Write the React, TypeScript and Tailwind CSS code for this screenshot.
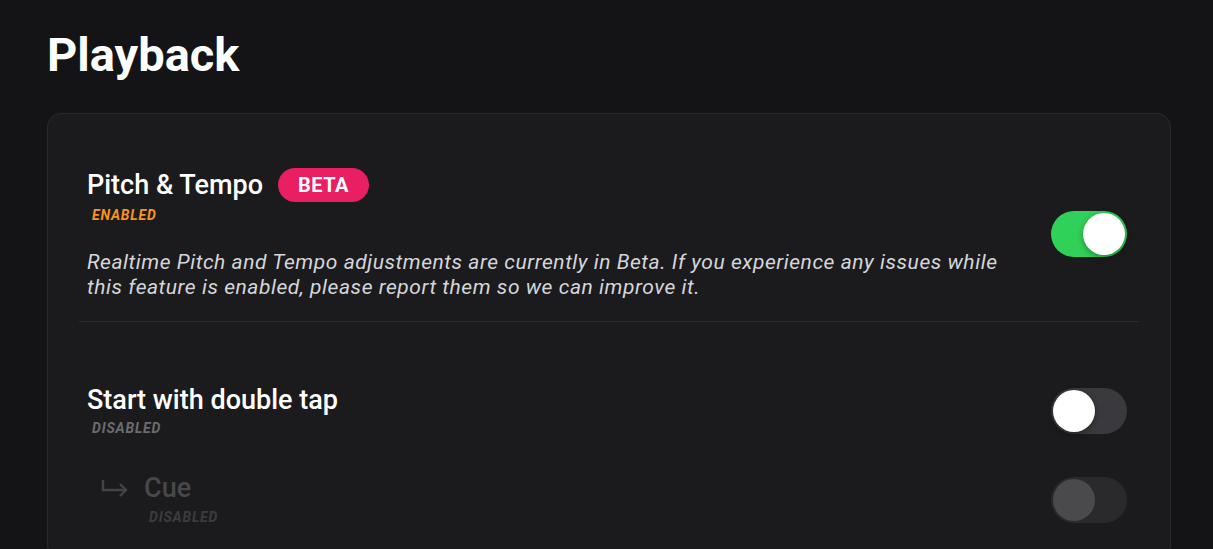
import React from 'react';

const font = { fontFamily: 'Roboto, "Noto Sans", sans-serif' };

const Toggle = ({ on, dim }: { on?: boolean; dim?: boolean }) => {
    const track = on ? 'bg-[#30d158]' : dim ? 'bg-[#2a2a2c]' : 'bg-[#3a3a3e]';
    const knob = dim ? 'bg-[#4a4a4c]' : 'bg-white';
    return (
        <div className={`flex h-[46px] w-[76px] shrink-0 items-center rounded-full p-[2px] ${track} ${on ? 'justify-end' : 'justify-start'}`}>
            <div className={`h-[42px] w-[42px] rounded-full ${knob} ${dim ? '' : 'shadow-[0_2px_6px_rgba(0,0,0,0.35)]'}`} />
        </div>
    );
};

export default function App() {
    return (
        <div className="min-h-screen bg-[#141416] text-white" style={font}>
            <div className="pl-[47px] pr-[42px] pt-[26px]">
                <h1 className="text-[47px] font-bold leading-[58px]">Playback</h1>

                <div className="mt-[29px] rounded-[14px] border border-[#2a2a2d] bg-[#1b1b1d] px-[31px] pt-[54px] pb-8">
                    {/* Pitch & Tempo */}
                    <div className="flex items-center justify-between pl-[8px] pr-[12px] pb-[21px]">
                        <div>
                            <div className="flex items-center">
                                <span className="text-[27px] font-medium leading-[30px]">Pitch &amp; Tempo</span>
                                <span className="ml-[15px] rounded-full bg-[#e91e63] px-[20px] text-[20px] font-bold leading-[34px] tracking-[0.5px]">BETA</span>
                            </div>
                            <div className="mt-[5px] pl-[5px] text-[14px] font-bold italic leading-[17px] tracking-[0.8px] text-[#f7931e]">ENABLED</div>
                            <p className="mt-[26px] max-w-[930px] text-[21px] italic leading-[25px] tracking-[0.55px] text-[#d6d6da]">
                                Realtime Pitch and Tempo adjustments are currently in Beta. If you experience any issues while this feature is enabled, please report them so we can improve it.
                            </p>
                        </div>
                        <Toggle on />
                    </div>

                    <div className="h-px bg-[#2a2a2d]" />

                    {/* Start with double tap */}
                    <div className="flex items-center justify-between pl-[8px] pr-[12px] pt-[63px]">
                        <div>
                            <div className="text-[27px] font-medium leading-[30px]">Start with double tap</div>
                            <div className="mt-[5px] pl-[5px] text-[14px] font-bold italic leading-[17px] tracking-[0.8px] text-[#6b6b70]">DISABLED</div>
                        </div>
                        <Toggle />
                    </div>

                    {/* Cue */}
                    <div className="mt-[36px] flex items-center justify-between pl-[8px] pr-[12px]">
                        <div className="flex items-start">
                            <svg viewBox="0 0 28 18" className="ml-[14px] mt-[6px] h-[18px] w-[28px] text-[#444447]" fill="none" stroke="currentColor" strokeWidth={2.4}>
                                <path d="M2 1v10h22" />
                                <path d="M19 5l6 6-6 6" />
                            </svg>
                            <div className="ml-[15px]">
                                <div className="text-[27px] font-medium leading-[30px] text-[#48484b]">Cue</div>
                                <div className="mt-[6px] pl-[5px] text-[14px] font-bold italic leading-[17px] tracking-[0.8px] text-[#3c3c3f]">DISABLED</div>
                            </div>
                        </div>
                        <Toggle dim />
                    </div>
                </div>
            </div>
        </div>
    );
}
